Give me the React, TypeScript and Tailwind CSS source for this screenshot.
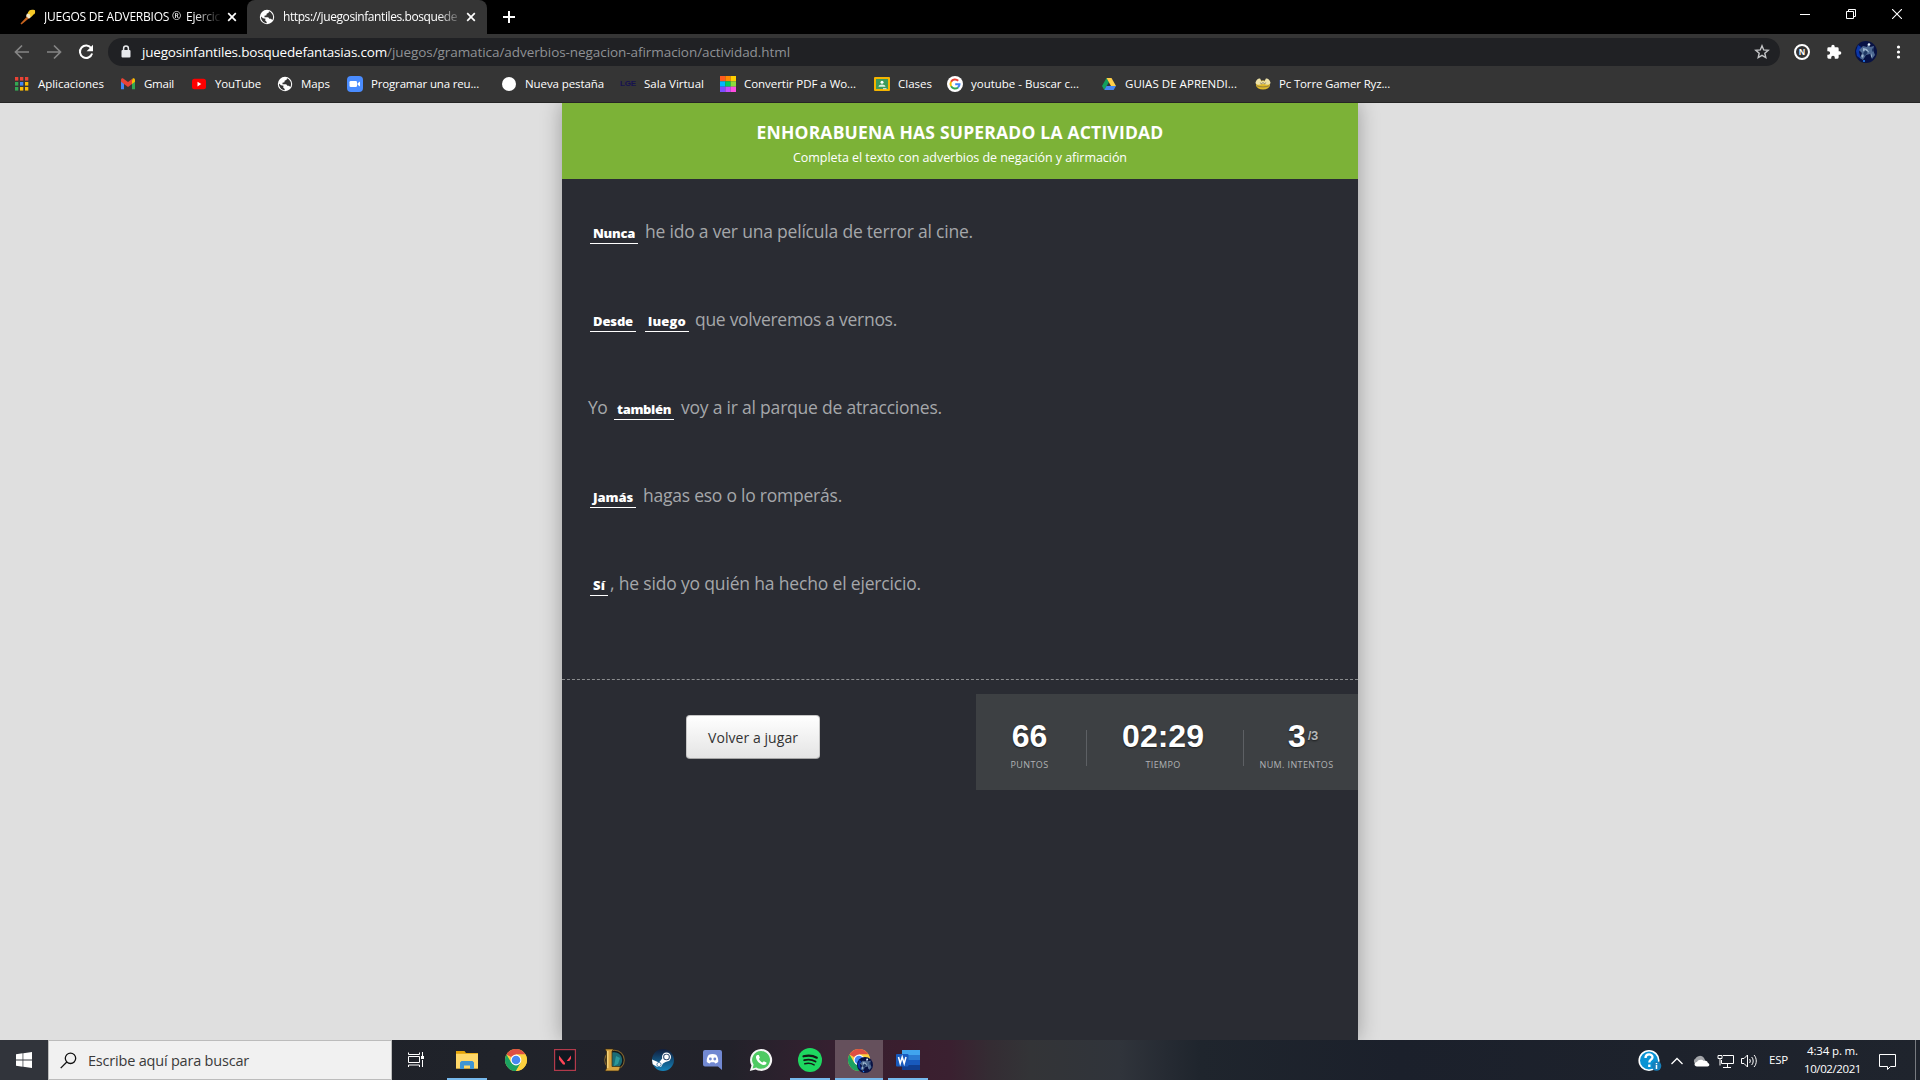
import { useLayoutEffect, useRef, type ReactNode } from "react";

// Text set to a fixed advance width by spreading the difference over its letters.
function Fit({ w, className = "", children }: { w: number; className?: string; children: string }) {
  const ref = useRef<HTMLSpanElement>(null);
  useLayoutEffect(() => {
    const el = ref.current;
    if (!el) return;
    el.style.letterSpacing = "0px";
    const natural = el.getBoundingClientRect().width;
    el.style.letterSpacing = `${(w - natural) / children.length}px`;
  }, [w, children]);
  return (
    <span ref={ref} className={`inline-block whitespace-pre shrink-0 ${className}`}>
      {children}
    </span>
  );
}

const Globe = () => (
  <svg width="16" height="16" viewBox="0 0 16 16">
    <circle cx="8" cy="8" r="7.200" fill="#fff" />
    <path d="M2 7.500 4 9.200l2.500.6-.3 1.700 1.500 1.400v1.300C4.300 14 1.700 11 2 7.500zM10 2.200 9.600 3.700l-2 1-.1 1.500-2 .6v1.500h3.700l1.200 1.500h1.500l1.500 1.200c1-1.800 1-4.200-.2-6-.8-1.300-1.900-2.300-3.200-2.800z" fill="#353535" />
  </svg>
);

const ChromeLogo = ({ size = 24 }: { size?: number }) => (
  <svg width={size} height={size} viewBox="0 0 24 24">
    <circle cx="12" cy="12" r="11" fill="#fdd13e" />
    <path d="M12 12 2.500 6.500A11 11 0 0 1 21.500 6.500H12z" fill="#dd4f43" />
    <path d="M2.470 6.500A11 11 0 0 0 12 23l4.800-8.200L12 12 7.300 14.700z" fill="#1ba261" />
    <path d="M12 6.500h9.500A11 11 0 0 1 12 23l4.800-8.200z" fill="#fdd13e" />
    <circle cx="12" cy="12" r="5.400" fill="#fff" />
    <circle cx="12" cy="12" r="4.300" fill="#4688f1" />
  </svg>
);

const Avatar = ({ size }: { size: number }) => (
  <svg width={size} height={size} viewBox="0 0 22 22">
    <circle cx="11" cy="11" r="11" fill="#081244" />
    <path d="M3 4l3 2-2 5 2 7-4-3-1-5z" fill="#0a36a8" />
    <path d="M13 3l2 3 4-1-1 4 2 5-3 4-2-5-4 1-3 5-3-2 2-5-3-3 4-4 4 1z" fill="#4f6a92" />
    <path d="M8 7l4 1 2 3-2 1-4-2zM14 4l1 3M6 15l3-3-1 5zM16 12l1 3-1 2z" fill="#9db6d0" />
    <path d="M10 9l3 2-3 4-2-2zM17 7l2 2-2 2z" fill="#203864" />
    <circle cx="14" cy="3.500" r="1.300" fill="#e9f6ff" />
    <circle cx="9" cy="20" r="1" fill="#2588ff" />
  </svg>
);

const AppsGrid = () => {
  const c = ["#ea4335", "#ea4335", "#ea4335", "#34a853", "#4285f4", "#fbbc05", "#34a853", "#fbbc05", "#fbbc05"];
  return (
    <svg width="16" height="16" viewBox="0 0 16 16">
      {c.map((f, i) => (
        <rect key={i} x={1 + (i % 3) * 5} y={1 + Math.floor(i / 3) * 5} width="3.300" height="3.600" fill={f} />
      ))}
    </svg>
  );
};

const PdfGrid = () => {
  const c = ["#ff5a1f", "#ff8a00", "#ffce00", "#00b7ff", "#00d05a", "#8bdc3c", "#7a4dff", "#c44dff", "#ff4de1"];
  return (
    <svg width="16" height="16" viewBox="0 0 16 16">
      {c.map((f, i) => (
        <rect key={i} x={(i % 3) * 5.34} y={Math.floor(i / 3) * 5.34} width="5.400" height="5.400" fill={f} />
      ))}
    </svg>
  );
};

const bookmarks: { icon: ReactNode; text: string; box: string; w: number }[] = [
  { icon: <AppsGrid />, text: "Aplicaciones", box: "w-[106px]", w: 66 },
  {
    icon: (
      <svg width="16" height="16" viewBox="0 0 16 16">
        <path d="M1 4v9.300h3V7z" fill="#4285f4" />
        <path d="M12 7v6.300h3V4z" fill="#34a853" />
        <path d="M12 4.500V8l3-2.300V4c0-1.600-1.500-2-2.500-1.300z" fill="#fbbc04" />
        <path d="M1 4c0-1.600 1.500-2 2.500-1.300L8 6.100l4-3.100v5L8 11 4 8 1 5.700z" fill="#ea4335" />
      </svg>
    ),
    text: "Gmail", box: "w-[71px]", w: 30,
  },
  {
    icon: (
      <svg width="16" height="16" viewBox="0 0 16 16">
        <rect x="1" y="2.800" width="14" height="10.500" rx="2.500" fill="#f00" />
        <path d="M6.500 5.800v4.600l3.800-2.300z" fill="#fff" />
      </svg>
    ),
    text: "YouTube", box: "w-[86px]", w: 46,
  },
  { icon: <Globe />, text: "Maps", box: "w-[70px]", w: 29 },
  {
    icon: (
      <svg width="16" height="16" viewBox="0 0 16 16">
        <rect width="16" height="16" rx="4" fill="#4a8cff" />
        <rect x="2.500" y="5" width="7.500" height="6" rx="1.300" fill="#fff" />
        <path d="M10.600 7.200 13 5.500v5l-2.400-1.700z" fill="#fff" />
      </svg>
    ),
    text: "Programar una reu...", box: "w-[154px]", w: 108,
  },
  { icon: <span className="size-[14px] rounded-full bg-white" />, text: "Nueva pestaña", box: "w-[119px]", w: 79 },
  {
    icon: <Fit w={16} className="text-[8px] font-bold text-[#15124f] font-['Liberation_Sans']">LGE</Fit>,
    text: "Sala Virtual", box: "w-[100px]", w: 60,
  },
  { icon: <PdfGrid />, text: "Convertir PDF a Wo...", box: "w-[154px]", w: 112 },
  {
    icon: (
      <svg width="16" height="16" viewBox="0 0 16 16">
        <rect y="1" width="16" height="14" rx="1" fill="#f4b400" />
        <rect x="2" y="3" width="12" height="10" fill="#3c9a5c" />
        <circle cx="8" cy="6.300" r="1.500" fill="#fff" />
        <path d="M4.500 10.800c0-1.400 2-2.200 3.500-2.200s3.500.8 3.500 2.200z" fill="#e0f0e5" />
        <rect x="9" y="12.200" width="3.500" height="1" fill="#e8eaed" />
      </svg>
    ),
    text: "Clases", box: "w-[73px]", w: 34,
  },
  {
    icon: (
      <svg width="16" height="16" viewBox="0 0 16 16" fill="none" strokeWidth="2">
        <circle cx="8" cy="8" r="8" fill="#fff" />
        <path d="M11.200 4.800A4.500 4.500 0 0 0 4.100 5.700" stroke="#ea4335" />
        <path d="M4.100 5.700a4.500 4.500 0 0 0 0 4.600" stroke="#fbbc05" />
        <path d="M4.100 10.300a4.500 4.500 0 0 0 6.900 1.100" stroke="#34a853" />
        <path d="M11 11.400c1-.8 1.500-2 1.500-3.200H8.200" stroke="#4285f4" />
      </svg>
    ),
    text: "youtube - Buscar c...", box: "w-[154px]", w: 108,
  },
  {
    icon: (
      <svg width="16" height="16" viewBox="0 0 16 16">
        <path d="M5.500 2 1 10l2.300 4L8 6z" fill="#11a05e" />
        <path d="M5.500 2h5l4.500 8h-5z" fill="#ffcf48" />
        <path d="M5.500 10H15l-2.400 4H3.300z" fill="#4587f4" />
      </svg>
    ),
    text: "GUIAS DE APRENDI...", box: "w-[154px]", w: 112,
  },
  {
    icon: (
      <svg width="16" height="16" viewBox="0 0 16 16">
        <ellipse cx="8" cy="9" rx="7" ry="4.500" fill="#e0b92a" />
        <path d="M.5 6.500C1.500 3 4 2 5.300 2.800l1.200 3L8 4.500l1.500 1.300 1.200-3C12 2 14.500 3 15.500 6.500c0 1.500-1.500 2.500-3 2.200L8 8l-4.500.7C2 9 .5 8 .5 6.500z" fill="#eee2a8" />
        <path d="M2 9.800c3 1.500 9 1.500 12 0M5.300 6.500l1 1.500L8 6.500 9.700 8l1-1.500" stroke="#6b6048" strokeWidth=".7" fill="none" />
      </svg>
    ),
    text: "Pc Torre Gamer Ryz...", box: "w-[150px]", w: 111,
  },
];

function Close() {
  return (
    <svg width="16" height="16" viewBox="0 0 16 16" stroke="#fff" strokeWidth="1.700">
      <path d="m4.200 4.200 7.600 7.600M11.800 4.200l-7.600 7.600" />
    </svg>
  );
}

function TabStrip() {
  return (
    <div className="flex h-[34px] bg-black text-[12px] text-white">
      <div className="flex h-[34px] w-[247px] items-center pl-5">
        <svg width="16" height="16" viewBox="0 0 16 16">
          <path d="M.5 14.500 7 7.500l2 1.700L1.500 15.500z" fill="#c8641e" />
          <path d="M8 3.500c1.500-3 3.500-3 7-2.300 0 1.300.5 2.300-.5 3.800-1.500.5-2 2-4 3.500L7.500 6z" fill="#f6c927" />
          <path d="m7 4.500 3 1 .5 3-1.500 1.200-3-2.500z" fill="#f7e9c5" />
        </svg>
        <div className="ml-[8px] flex w-[177px] overflow-hidden [mask-image:linear-gradient(to_right,#000_150px,transparent_178px)]">
          <Fit w={128}>JUEGOS DE ADVERBIOS </Fit>
          <Fit w={14} className="text-[11px]">® </Fit>
          <Fit w={34}>Ejercic</Fit>
        </div>
        <span className="ml-[3px]"><Close /></span>
      </div>
      <div className="flex h-[34px] w-[240px] items-center rounded-t-[8px] bg-[#353535] pl-3">
        <Globe />
        <div className="ml-[8px] w-[176px] overflow-hidden [mask-image:linear-gradient(to_right,#000_155px,transparent_180px)]">
          <Fit w={174}>https://juegosinfantiles.bosquede</Fit>
        </div>
        <span className="ml-[4px]"><Close /></span>
      </div>
      <svg className="ml-[14px] self-center" width="16" height="16" viewBox="0 0 16 16" stroke="#fff" strokeWidth="2">
        <path d="M2 8h12M8 2v12" />
      </svg>
      <div className="ml-auto flex h-[28px] items-center gap-9 pr-[18px]">
        <svg width="10" height="10" viewBox="0 0 10 10" stroke="#fff"><path d="M0 5.500h10" /></svg>
        <svg width="10" height="10" viewBox="0 0 10 10" stroke="#fff" fill="none">
          <path d="M.5 2.500h7v7h-7zM2.500 2.500v-2h7v7h-2" />
        </svg>
        <svg width="10" height="10" viewBox="0 0 10 10" stroke="#fff" strokeWidth="1.100"><path d="m0 0 10 10M10 0 0 10" /></svg>
      </div>
    </div>
  );
}

function Toolbar() {
  return (
    <div className="flex h-9 items-center bg-[#353535]">
      <svg className="ml-3" width="20" height="20" viewBox="0 0 20 20" stroke="#858585" strokeWidth="1.700" fill="none">
        <path d="M17 10H4M10 3.500 3.500 10l6.500 6.500" />
      </svg>
      <svg className="ml-3" width="20" height="20" viewBox="0 0 20 20" stroke="#858585" strokeWidth="1.700" fill="none">
        <path d="M3 10h13M10 3.500l6.500 6.500-6.500 6.500" />
      </svg>
      <svg className="ml-3" width="20" height="20" viewBox="0 0 20 20" fill="none">
        <path d="M15.300 6.300A6.200 6.200 0 1 0 16.100 11.500" stroke="#fff" strokeWidth="2" />
        <path d="M17 2.800v6.400h-6.400z" fill="#fff" />
      </svg>
      <div className="ml-[12px] flex h-7 w-[1672px] items-center rounded-full bg-[#202124] text-[13.500px]">
        <svg className="ml-[11px]" width="14" height="16" viewBox="0 0 14 16">
          <rect x="2.500" y="6" width="9" height="7.500" rx="1" fill="#e8eaed" />
          <path d="M4.600 7V4.500a2.400 2.400 0 0 1 4.800 0V7" stroke="#e8eaed" strokeWidth="1.500" fill="none" />
        </svg>
        <div className="ml-[9px] flex h-full items-center">
          <Fit w={245} className="text-white">juegosinfantiles.bosquedefantasias.com</Fit>
          <Fit w={403} className="text-[#8f9195]">/juegos/gramatica/adverbios-negacion-afirmacion/actividad.html</Fit>
        </div>
        <svg className="mr-[10px] ml-auto" width="16" height="16" viewBox="0 0 16 16" fill="none" stroke="#c4c5c7" strokeWidth="1.400">
          <path d="m8 1.800 1.700 4.100 4.500.4-3.400 2.900 1 4.400L8 11.300l-3.800 2.300 1-4.400-3.400-2.900 4.500-.4z" />
        </svg>
      </div>
      <div className="ml-[14px] flex size-4 items-center justify-center rounded-full border-2 border-white text-[8px] font-bold text-white">N</div>
      <svg className="ml-4" width="16" height="16" viewBox="0 0 24 24" fill="#fff">
        <path d="M20.500 11H19V7a2 2 0 0 0-2-2h-4V3.500a2.500 2.500 0 0 0-5 0V5H4a2 2 0 0 0-2 2v3.800h1.500a2.700 2.700 0 0 1 0 5.400H2V20a2 2 0 0 0 2 2h3.800v-1.500a2.700 2.700 0 0 1 5.400 0V22H17a2 2 0 0 0 2-2v-4h1.500a2.500 2.500 0 0 0 0-5z" />
      </svg>
      <span className="ml-[13px]"><Avatar size={22} /></span>
      <svg className="ml-[18px]" width="6" height="16" viewBox="0 0 6 16" fill="#fff">
        <circle cx="3.500" cy="3" r="1.600" /><circle cx="3.500" cy="8" r="1.600" /><circle cx="3.500" cy="13" r="1.600" />
      </svg>
    </div>
  );
}

const Word = ({ box, w, children }: { box: string; w: number; children: string }) => (
  <span className={`inline-flex h-[23px] shrink-0 items-baseline justify-center border-b border-white leading-[24px] text-[13px] font-extrabold text-white ${box}`}>
    <Fit w={w}>{children}</Fit>
  </span>
);

const Row = ({ children }: { children: ReactNode }) => (
  <p className="flex h-[88px] items-baseline text-[17.500px] leading-[28px] text-[#a5a7aa]">{children}</p>
);

function Activity() {
  return (
    <main className="flex h-[937px] justify-center overflow-hidden bg-[#dfdfdf]">
      <section className="flex w-[796px] flex-col bg-[#2a2c33] shadow-[0_0_20px_rgba(0,0,0,0.3)]">
        <header className="flex h-[76px] flex-col items-center bg-[#7cb237] pt-[16px] text-white">
          <Fit w={407} className="text-[17.500px] leading-[26px] font-bold">ENHORABUENA HAS SUPERADO LA ACTIVIDAD</Fit>
          <Fit w={334} className="mt-[2px] text-[12.500px] leading-[22px]">Completa el texto con adverbios de negación y afirmación</Fit>
        </header>
        <div className="h-[501px] border-b border-dashed border-[#8b8d8f] pt-[38px]">
          <Row><Word box="ml-7 w-12" w={42}>Nunca</Word><Fit w={328} className="ml-[7px]">he ido a ver una película de terror al cine.</Fit></Row>
          <Row><Word box="ml-7 w-[46px]" w={40}>Desde</Word><Word box="ml-[9px] w-11" w={38}>luego</Word><Fit w={202} className="ml-[6px]">que volveremos a vernos.</Fit></Row>
          <Row><Fit w={19} className="ml-[26px]">Yo</Fit><Word box="ml-[7px] w-[60px]" w={54}>también</Word><Fit w={261} className="ml-[7px]">voy a ir al parque de atracciones.</Fit></Row>
          <Row><Word box="ml-7 w-[46px]" w={40}>Jamás</Word><Fit w={199} className="ml-[7px]">hagas eso o lo romperás.</Fit></Row>
          <Row><Word box="ml-7 w-[18px]" w={12}>Sí</Word><Fit w={311} className="ml-[2px]">, he sido yo quién ha hecho el ejercicio.</Fit></Row>
        </div>
        <div className="flex pt-[14px]">
          <button className="mt-[21px] ml-[124px] h-[44px] w-[134px] rounded-[4px] border border-[#c6c6c6] border-b-[#a5a5a5] bg-linear-to-b from-white to-[#e4e4e4] text-[14px] text-[#333]">
            <Fit w={90}>Volver a jugar</Fit>
          </button>
          <div className="ml-auto flex h-24 w-[382px] items-center bg-[#3d4043] text-center">
            <Stat box="w-[110px] pr-[3px]" label="PUNTOS" w={38}>66</Stat>
            <i className="mt-3 h-9 w-px bg-[#5d6064]" />
            <Stat box="w-[156px] pr-[4px]" label="TIEMPO" w={35}>02:29</Stat>
            <i className="mt-3 h-9 w-px bg-[#5d6064]" />
            <Stat box="w-[108px] pr-[3px]" label="NUM. INTENTOS" w={74} extra="/3">3</Stat>
          </div>
        </div>
      </section>
    </main>
  );
}

function Stat({ box, label, w, extra, children }: { box: string; label: string; w: number; extra?: string; children: string }) {
  return (
    <div className={`flex h-full flex-col items-center pt-[24px] ${box}`}>
      <div className={`flex h-9 items-start font-['Liberation_Sans'] text-[32px] leading-[36px] font-bold text-white [text-shadow:0_1px_2px_rgba(0,0,0,0.6)] ${extra ? "pl-[13px]" : ""}`}>
        {children}
        {extra && <span className="ml-[2px] text-[13px] leading-[36px] tracking-[-0.3px] text-[#b5b7b9]">{extra}</span>}
      </div>
      <Fit w={w} className="mt-px text-[9px] leading-[20px] text-[#b0b2b4]">{label}</Fit>
    </div>
  );
}

const Cell = ({ box = "w-[48px]", children, bar }: { box?: string; children: ReactNode; bar?: boolean }) => (
  <div className={`flex h-10 shrink-0 flex-col items-center ${box}`}>
    <div className="flex h-[38px] items-center pt-[2px]">{children}</div>
    <i className={`h-[2px] ${bar ? "w-10 bg-[#76b9ed]" : "w-0"}`} />
  </div>
);

function Taskbar() {
  return (
    <footer className="flex h-10 bg-[linear-gradient(to_right,#1d2028_0,#20232a_500px,#22222a_730px,#352030_830px,#3a1e2e_900px,#3a2030_950px,#342c33_990px,#333437_1030px,#30343b_1120px,#262b33_1165px,#1f252d_1200px,#1b202b_1400px,#1f242d_1920px)]">
      <div className="flex w-12 items-center justify-center bg-[#31343b]">
        <svg width="16" height="16" viewBox="0 0 16 16" fill="#fff">
          <path d="M0 2.200 6.600 1.300v6.300H0zM7.300 1.200 16 0v7.600H7.300zM0 8.400h6.600v6.300L0 13.800zM7.300 8.400H16V16l-8.700-1.200z" />
        </svg>
      </div>
      <div className="flex w-[344px] items-center border border-[#bcbcbc] bg-[#f1f1f1] pl-[11px] text-[14.500px] text-[#3a3a3a]">
        <svg width="17" height="17" viewBox="0 0 17 17" fill="none" stroke="#111" strokeWidth="1.300">
          <circle cx="10.500" cy="6.300" r="5.200" /><path d="M6.800 10 .7 16.100" />
        </svg>
        <Fit w={161} className="mt-[2px] ml-[11px]">Escribe aquí para buscar</Fit>
      </div>
      <Cell>
        <svg width="18" height="18" viewBox="0 0 18 18" fill="none" stroke="#fff">
          <path d="M1.500 1.500v2h11v-2M1.500 16v-2h11v2M1.500 5.500h11v6h-11zM15.500 1v4M15.500 9v7" /><rect x="14" y="5" width="3" height="3" fill="#fff" stroke="none" />
        </svg>
      </Cell>
      <Cell box="w-[53px]" bar>
        <svg width="22" height="20" viewBox="0 0 22 20">
          <path d="M0 2.500V1h8.500l1.500 2h12v15.500H0z" fill="#e5a50a" /><path d="M0 3.800h22v14.700H0z" fill="#ffd869" />
          <path d="M4 19v-6.500L5.500 11h11l1.500 1.500V19h-4v-3.500H8V19z" fill="#3f95d4" />
        </svg>
      </Cell>
      <Cell box="w-[46px]"><ChromeLogo /></Cell>
      <Cell box="w-[52px]">
        <svg width="22" height="22" viewBox="0 0 22 22">
          <rect x=".6" y=".6" width="20.800" height="20.800" fill="#101820" stroke="#b23a4b" strokeWidth="1.200" />
          <path d="M5 6.500 11 14v1.500H9L5 10.500zM17 6.500l-4.300 5.500h2.600L17 9.700z" fill="#fd4556" />
        </svg>
      </Cell>
      <Cell box="w-[45px]">
        <svg width="24" height="24" viewBox="0 0 24 24">
          <circle cx="12.500" cy="12" r="9.800" fill="#10171c" stroke="#80632c" strokeWidth="1.100" />
          <path d="M10 4.500c6-1.500 11 3 10 9-.3 2-1.500 4-3 5.500H10z" fill="#1c6c75" /><path d="M14 8l4 2-2 6-4 2z" fill="#2c9899" />
          <path d="M3 1h8.500L10 3.200v15.300h8.500L16.700 23H3l1.500-2.500v-17z" fill="#d6a340" stroke="#3a290c" strokeWidth=".7" />
          <path d="M5 3h1.500v17H5z" fill="#f2d27c" />
        </svg>
      </Cell>
      <Cell box="w-[53px]">
        <svg width="24" height="24" viewBox="0 0 24 24">
          <defs><linearGradient id="st" x1="0" y1="0" x2="0" y2="1"><stop stopColor="#111d3c" /><stop offset="1" stopColor="#1584bb" /></linearGradient></defs>
          <circle cx="12" cy="12" r="11" fill="url(#st)" />
          <path d="M1 11.500 8 14.500 12 9.500 18 12 12 15.500 10 19l-4-.2-4.300-2.500z" fill="#fff" />
          <circle cx="15.500" cy="9" r="4.500" fill="#fff" /><circle cx="15.500" cy="9" r="3.300" fill="#1b3a63" /><circle cx="15.500" cy="9" r="2.400" fill="#fff" />
          <circle cx="8" cy="16.500" r="2.100" fill="#fff" stroke="#1b5b8d" strokeWidth=".7" />
        </svg>
      </Cell>
      <Cell box="w-[47px]">
        <svg width="22" height="22" viewBox="0 0 22 22">
          <path d="M3 1h15A2 2 0 0 1 20 3v18l-4-3.500H3a2 2 0 0 1-2-2V3a2 2 0 0 1 2-2z" fill="#7289d2" />
          <path d="M6.800 5.700c2.300-.8 5.100-.8 7.400 0 1.500 2 2.300 4.500 2 7.300-1 1-2 1.200-3 1.500l-.9-1.300H8.700l-.9 1.300c-1-.3-2-.5-3-1.500-.3-3 .5-5.300 2-7.300z" fill="#fff" />
          <circle cx="8.400" cy="10" r="1.400" fill="#7289d2" /><circle cx="12.800" cy="10" r="1.400" fill="#7289d2" />
        </svg>
      </Cell>
      <Cell box="w-[50px]">
        <svg width="24" height="24" viewBox="0 0 24 24">
          <path d="M12 .9a11 11 0 0 0-9.500 16.500L.8 23l5.800-1.600A11 11 0 1 0 12 .9z" fill="#f5f5f5" />
          <path d="M12 3a8.900 8.900 0 0 0-7.400 13.800l-1 3.600 3.700-1A8.900 8.900 0 1 0 12 3z" fill="#4fca63" />
          <path d="M8.500 7c-1 .2-1.800 1.300-1.400 3 .6 3 4 6.500 7.500 7 1.500.2 3-.9 2.900-2.400l-2.700-1.400-1.300 1.400c-1.500-.6-3-2-3.600-3.500l1-1.300L9.800 7z" fill="#fff" />
        </svg>
      </Cell>
      <Cell box="w-[48px]" bar>
        <svg width="24" height="24" viewBox="0 0 24 24" fill="none" stroke="#131a16" strokeLinecap="round">
          <circle cx="12" cy="12" r="12" fill="#1ed760" stroke="none" />
          <path d="M5.500 8.300c4.500-1.200 9.500-.8 13.300 1.400" strokeWidth="2.200" /><path d="M6.200 12.200c3.900-1.100 8-.6 11.300 1.300" strokeWidth="1.900" /><path d="M6.800 15.800c3.300-.8 6.500-.5 9.300 1.100" strokeWidth="1.500" />
        </svg>
      </Cell>
      <div className="ml-px flex h-10 w-12 shrink-0 items-center justify-center border-b-2 border-[#76b9ed] bg-[#65505c]">
        <div className="relative mt-[2px] size-6">
          <ChromeLogo />
          <span className="absolute top-[9px] left-[10px]"><Avatar size={16} /></span>
        </div>
      </div>
      <Cell box="w-[50px]" bar>
        <svg width="24" height="22" viewBox="0 0 24 22">
          <path d="M6 1h18v5.200H6z" fill="#41a5ee" /><path d="M6 6h18v5.200H6z" fill="#2b7cd3" /><path d="M6 11h18v5.200H6z" fill="#185abd" /><path d="M6 16h18v5H6z" fill="#103f91" />
          <rect y="5" width="12.500" height="12.500" rx="1" fill="#185abd" />
          <path d="m2.500 8 1.700 6.500L6.200 8l2 6.500L10 8" stroke="#fff" strokeWidth="1.500" fill="none" />
        </svg>
      </Cell>
      <div className="ml-auto flex items-center pt-px text-white">
        <svg width="24" height="24" viewBox="0 0 24 24">
          <circle cx="11" cy="11.500" r="9.800" fill="#0a93d4" stroke="#fff" strokeWidth="1.600" />
          <path d="M7.500 9c0-5 7-4.500 7-.8 0 2.500-3.200 2.600-3.200 5.300M11.300 15.500V18" fill="none" stroke="#fff" strokeWidth="2.300" />
          <circle cx="18.500" cy="17" r="4.800" fill="#1780bb" /><path d="M18.500 14v1.300M18.500 16v4" stroke="#fff" strokeWidth="1.500" />
        </svg>
        <svg className="ml-[9px]" width="12" height="8" viewBox="0 0 12 8" fill="none" stroke="#fff" strokeWidth="1.300"><path d="m.5 7 5.500-5.500L11.500 7" /></svg>
        <svg className="ml-[10px]" width="17" height="12" viewBox="0 0 17 12">
          <path d="M3 9a3 3 0 0 1-.5-5.500A5 5 0 0 1 11 3l2 4z" fill="#a4a6aa" /><path d="M4 11.500c-3 0-3.500-4 0-4.500 1-2.500 5-3 6.800-1 3-.7 4 1 4 2 2.200.5 2 3.500-.3 3.500z" fill="#fff" />
        </svg>
        <svg className="ml-[7px]" width="17" height="14" viewBox="0 0 17 14" fill="none" stroke="#fff">
          <path d="M6 1.500h10.500v8H4.500V6M10.500 9.500v4M6 13.500h8M1 1.500h4v3H1zM3 4.500v7" />
        </svg>
        <svg className="ml-[7px]" width="17" height="14" viewBox="0 0 17 14" fill="none" stroke="#fff">
          <path d="M.5 4.500h2.500L6.500 1v12L3 9.500H.5zM8.500 5c1 1 1 3 0 4M10.700 3c2 2 2 6 0 8M13 1c3 3 3 9 0 12" />
        </svg>
        <Fit w={19} className="mb-[2px] ml-[11px] text-[11.500px]">ESP</Fit>
        <div className="mb-[2px] ml-[15px] flex w-[59px] flex-col items-center text-[11.500px] leading-[18px]">
          <Fit w={51}>4:34 p. m.</Fit>
          <Fit w={57}>10/02/2021</Fit>
        </div>
        <svg className="mt-[2px] ml-[17px]" width="17" height="16" viewBox="0 0 17 16" fill="none" stroke="#fff"><path d="M.5.500h16v12h-5l-3 3v-3h-8z" /></svg>
        <i className="ml-[19px] -mt-px h-10 w-px bg-[#777a80]" />
        <i className="w-1" />
      </div>
    </footer>
  );
}

export default function App() {
  return (
    <div className="h-[1080px] w-[1920px] overflow-hidden font-['Open_Sans','Noto_Sans',sans-serif]">
      <TabStrip />
      <Toolbar />
      <nav className="flex h-[33px] items-center border-b border-[#252525] bg-[#353535] pb-[4px] pl-[14px] text-[11.500px] text-white">
        {bookmarks.map((b) => (
          <div key={b.text} className={`flex shrink-0 items-center gap-2 ${b.box}`}>
            <span className="flex size-4 shrink-0 items-center justify-center">{b.icon}</span>
            <Fit w={b.w}>{b.text}</Fit>
          </div>
        ))}
      </nav>
      <Activity />
      <Taskbar />
    </div>
  );
}
